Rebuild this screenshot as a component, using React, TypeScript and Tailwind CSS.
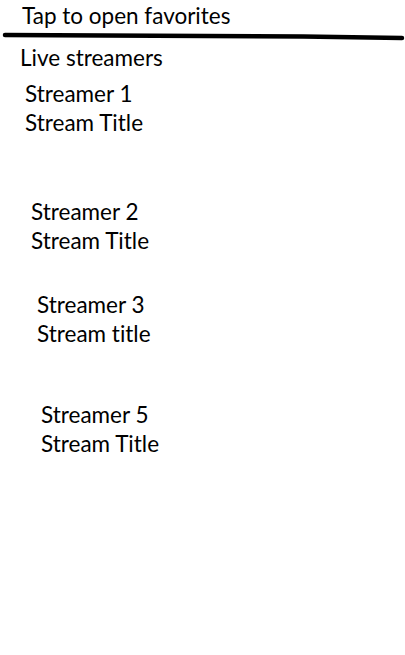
import React from "react";

const items = [
  { name: "Streamer 1", title: "Stream Title", cls: "ml-[25px] mt-[7px]" },
  { name: "Streamer 2", title: "Stream Title", cls: "ml-[31px] mt-[60px]" },
  { name: "Streamer 3", title: "Stream title", cls: "ml-[37px] mt-[35px]" },
  { name: "Streamer 5", title: "Stream Title", cls: "ml-[41px] mt-[52px]" },
];

export default function App() {
  return (
    <div className="w-[405px] h-[655px] bg-white text-black font-['Lato',sans-serif] text-[22.5px] leading-[29px] [font-variant-ligatures:none] overflow-hidden">
      <div className="pl-[22px] pt-[1px]">Tap to open favorites</div>
      <svg width="405" height="12" className="block">
        <path d="M5 5 L105 5.5 L303 6.5 L402 8" stroke="black" strokeWidth="4.5" fill="none" strokeLinecap="round" />
      </svg>
      <div className="pl-[20px] mt-[1px]">Live streamers</div>
      <div className="flex flex-col">
        {items.map((it) => (
          <div key={it.name} className={`flex flex-col ${it.cls}`}>
            <span>{it.name}</span>
            <span>{it.title}</span>
          </div>
        ))}
      </div>
    </div>
  );
}
